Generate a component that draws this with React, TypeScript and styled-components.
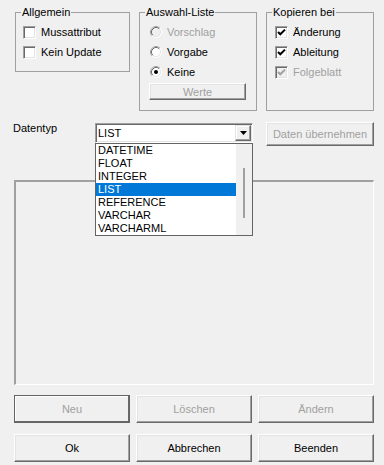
import React from "react";
import styled, { createGlobalStyle } from "styled-components";

const GlobalStyle = createGlobalStyle`
  html, body {
    margin: 0;
    padding: 0;
    background: #f0f0f0;
  }
  body {
    font-family: "Liberation Sans", Arial, sans-serif;
    font-size: 11px;
    color: #000;
  }
`;

const Dialog = styled.div`
  width: 360px;
  height: 465px;
  padding: 12px 0 0 14px;
`;

const TopRow = styled.div`
  display: flex;
  align-items: flex-start;
  gap: 9px;
  padding-left: 1px;
`;

const Group = styled.div<{ $w: number; $h: number }>`
  box-sizing: border-box;
  width: ${(p) => p.$w}px;
  height: ${(p) => p.$h}px;
  border: 1px solid #a0a0a0;
`;

const GroupTitle = styled.div`
  display: table;
  margin: -7px 0 0 5px;
  padding: 0 1px;
  line-height: 13px;
  background: #f0f0f0;
`;

const Options = styled.div<{ $pad: number }>`
  padding: 3px 0 0 ${(p) => p.$pad}px;
`;

const OptionRow = styled.div<{ $disabled?: boolean }>`
  display: flex;
  align-items: center;
  gap: 5px;
  height: 20px;
  color: ${(p) => (p.$disabled ? "#a0a0a0" : "#000")};
  white-space: nowrap;
`;

const Box = styled.span<{ $disabled?: boolean }>`
  box-sizing: border-box;
  display: flex;
  width: 13px;
  height: 13px;
  border: 1px solid;
  border-color: #a0a0a0 #fff #fff #a0a0a0;
  box-shadow: inset 1px 1px #696969, inset -1px -1px #e3e3e3;
  background: ${(p) => (p.$disabled ? "#f0f0f0" : "#fff")};
`;

const Check: React.FC<{ checked?: boolean; disabled?: boolean }> = ({ checked, disabled }) => (
  <Box $disabled={disabled}>
    {checked && (
      <svg width="11" height="11" viewBox="0 0 11 11">
        <path
          d="M2 5 L4.3 7.3 L9 2.6"
          fill="none"
          stroke={disabled ? "#a0a0a0" : "#000"}
          strokeWidth="2"
        />
      </svg>
    )}
  </Box>
);

const Radio: React.FC<{ checked?: boolean; disabled?: boolean }> = ({ checked, disabled }) => (
  <svg width="12" height="12" viewBox="0 0 12 12">
    <circle cx="6" cy="6" r="5" fill={disabled ? "#f0f0f0" : "#fff"} />
    <path d="M2.11 9.89 A5.5 5.5 0 0 1 9.89 2.11" fill="none" stroke="#a0a0a0" />
    <path d="M9.89 2.11 A5.5 5.5 0 0 1 2.11 9.89" fill="none" stroke="#fff" />
    <path d="M2.82 9.18 A4.5 4.5 0 0 1 9.18 2.82" fill="none" stroke="#696969" />
    <path d="M9.18 2.82 A4.5 4.5 0 0 1 2.82 9.18" fill="none" stroke="#e3e3e3" />
    {checked && <circle cx="6" cy="6" r="2" fill="#000" />}
  </svg>
);

const Button = styled.button<{ $default?: boolean }>`
  box-sizing: border-box;
  font: inherit;
  padding: 0;
  background: #f0f0f0;
  color: ${(p) => (p.disabled ? "#a0a0a0" : "#000")};
  border: 1px solid;
  border-color: ${(p) => (p.$default ? "#646464" : "#fff #696969 #696969 #fff")};
  box-shadow: ${(p) =>
    p.$default
      ? "inset -1px -1px #696969, inset 1px 1px #fff"
      : "inset -1px -1px #a0a0a0, inset 1px 1px #e3e3e3"};
`;

const WerteButton = styled(Button)`
  width: 97px;
  height: 17px;
  margin: 1px 0 0 -1px;
`;

const DataRow = styled.div`
  display: flex;
  align-items: flex-start;
  margin-top: 11px;
`;

const FieldLabel = styled.div`
  width: 82px;
  margin: 0 0 0 -1px;
  line-height: 13px;
`;

const ComboBox = styled.div`
  position: relative;
  width: 158px;
  margin-top: 1px;
`;

const ComboField = styled.div`
  box-sizing: border-box;
  display: flex;
  height: 20px;
  border: 1px solid;
  border-color: #a0a0a0 #fff #fff #a0a0a0;
  box-shadow: inset 1px 1px #696969, inset -1px -1px #e3e3e3;
  padding: 1px;
  background: #fff;
`;

const ComboText = styled.div`
  flex: 1;
  padding-left: 1px;
  line-height: 16px;
`;

const ArrowButton = styled.div`
  box-sizing: border-box;
  display: flex;
  align-items: center;
  justify-content: center;
  width: 16px;
  height: 16px;
  background: #f0f0f0;
  border: 1px solid;
  border-color: #e3e3e3 #696969 #696969 #e3e3e3;
  box-shadow: inset -1px -1px #a0a0a0, inset 1px 1px #fff;
`;

const DropList = styled.div`
  position: absolute;
  top: 100%;
  left: 0;
  right: 0;
  z-index: 2;
  box-sizing: border-box;
  display: flex;
  height: 93px;
  border: 1px solid #646464;
  background: #fff;
`;

const Items = styled.div`
  flex: 1;
`;

const Item = styled.div<{ $selected?: boolean }>`
  height: 13px;
  line-height: 13px;
  padding-left: 2px;
  background: ${(p) => (p.$selected ? "#0078d7" : "transparent")};
  color: ${(p) => (p.$selected ? "#fff" : "#000")};
`;

const ScrollTrack = styled.div`
  width: 16px;
  background: #f0f0f0;
  display: flex;
  justify-content: center;
  padding-top: 24px;
`;

const ScrollThumb = styled.div`
  width: 2px;
  height: 50px;
  background: #a0a0a0;
`;

const ApplyButton = styled(Button)`
  width: 108px;
  height: 24px;
  margin-left: auto;
`;

const Frame = styled.div`
  box-sizing: border-box;
  height: 205px;
  margin-top: 34px;
  border-top: 2px solid #a0a0a0;
  border-left: 2px solid #a0a0a0;
  border-right: 1px solid #fff;
  border-bottom: 1px solid #fff;
`;

const ButtonGrid = styled.div`
  display: grid;
  grid-template-columns: repeat(3, 1fr);
  column-gap: 6px;
  row-gap: 11px;
  margin-top: 10px;
`;

const DialogButton = styled(Button)`
  height: 28px;
`;

const types = ["DATETIME", "FLOAT", "INTEGER", "LIST", "REFERENCE", "VARCHAR", "VARCHARML"];

export default function App() {
  return (
    <>
      <GlobalStyle />
      <Dialog>
        <TopRow>
          <Group $w={115} $h={60}>
            <GroupTitle>Allgemein</GroupTitle>
            <Options $pad={7}>
              <OptionRow>
                <Check />
                Mussattribut
              </OptionRow>
              <OptionRow>
                <Check />
                Kein Update
              </OptionRow>
            </Options>
          </Group>
          <Group $w={118} $h={99}>
            <GroupTitle>Auswahl-Liste</GroupTitle>
            <Options $pad={10}>
              <OptionRow $disabled>
                <Radio disabled />
                Vorschlag
              </OptionRow>
              <OptionRow>
                <Radio />
                Vorgabe
              </OptionRow>
              <OptionRow>
                <Radio checked />
                Keine
              </OptionRow>
              <WerteButton disabled>Werte</WerteButton>
            </Options>
          </Group>
          <Group $w={108} $h={99}>
            <GroupTitle>Kopieren bei</GroupTitle>
            <Options $pad={8}>
              <OptionRow>
                <Check checked />
                Änderung
              </OptionRow>
              <OptionRow>
                <Check checked />
                Ableitung
              </OptionRow>
              <OptionRow $disabled>
                <Check checked disabled />
                Folgeblatt
              </OptionRow>
            </Options>
          </Group>
        </TopRow>

        <DataRow>
          <FieldLabel>Datentyp</FieldLabel>
          <ComboBox>
            <ComboField>
              <ComboText>LIST</ComboText>
              <ArrowButton>
                <svg width="7" height="4" viewBox="0 0 7 4">
                  <path d="M0 0 H7 L3.5 4 Z" fill="#000" />
                </svg>
              </ArrowButton>
            </ComboField>
            <DropList>
              <Items>
                {types.map((t) => (
                  <Item key={t} $selected={t === "LIST"}>
                    {t}
                  </Item>
                ))}
              </Items>
              <ScrollTrack>
                <ScrollThumb />
              </ScrollTrack>
            </DropList>
          </ComboBox>
          <ApplyButton disabled>Daten übernehmen</ApplyButton>
        </DataRow>

        <Frame />

        <ButtonGrid>
          <DialogButton disabled $default>
            Neu
          </DialogButton>
          <DialogButton disabled>Löschen</DialogButton>
          <DialogButton disabled>Ändern</DialogButton>
          <DialogButton>Ok</DialogButton>
          <DialogButton>Abbrechen</DialogButton>
          <DialogButton>Beenden</DialogButton>
        </ButtonGrid>
      </Dialog>
    </>
  );
}
